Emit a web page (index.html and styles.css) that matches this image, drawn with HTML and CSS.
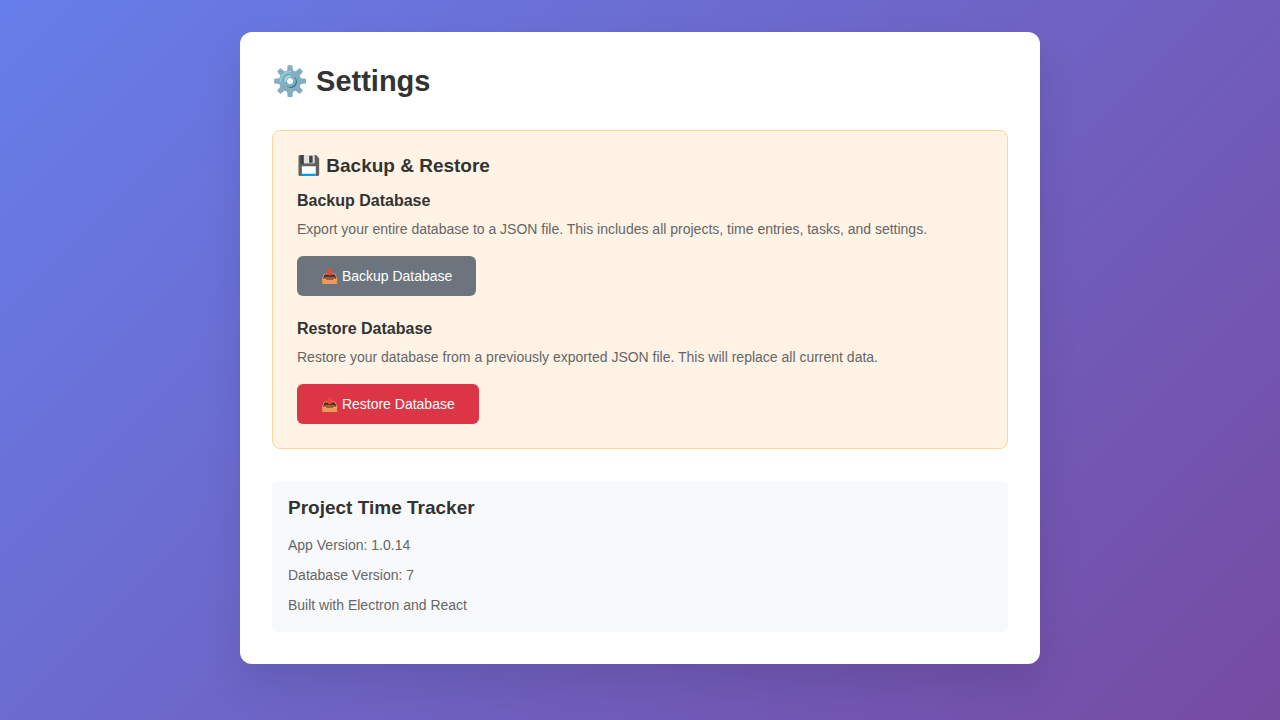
FILE: index.html
```html
<!DOCTYPE html>
<html lang="en">
<head>
<meta charset="utf-8">
<meta name="viewport" content="width=device-width, initial-scale=1">
<title>Settings</title>
<link rel="stylesheet" href="styles.css">
</head>
<body>
<main class="card">
  <h1 class="title">⚙️ Settings</h1>
  <section class="backup">
    <h2 class="heading">💾 Backup &amp; Restore</h2>
    <div class="action">
      <h3 class="subheading">Backup Database</h3>
      <p class="text">Export your entire database to a JSON file. This includes all projects, time entries, tasks, and settings.</p>
      <button type="button" class="button button-secondary">📥 Backup Database</button>
    </div>
    <div class="action">
      <h3 class="subheading">Restore Database</h3>
      <p class="text">Restore your database from a previously exported JSON file. This will replace all current data.</p>
      <button type="button" class="button button-danger">📤 Restore Database</button>
    </div>
  </section>
  <section class="about">
    <h2 class="heading">Project Time Tracker</h2>
    <p class="info">App Version: 1.0.14</p>
    <p class="info">Database Version: 7</p>
    <p class="info">Built with Electron and React</p>
  </section>
</main>
</body>
</html>
```
FILE: styles.css
```css
* {
  box-sizing: border-box;
  margin: 0;
  padding: 0;
}

body {
  min-height: 100vh;
  padding: 32px;
  font-family: "Liberation Sans", Arial, sans-serif;
  color: #333;
  background: linear-gradient(135deg, #667eea 0%, #764ba2 100%);
}

.card {
  max-width: 800px;
  margin: 0 auto;
  padding: 32px;
  background: #fff;
  border-radius: 12px;
  box-shadow: 0 20px 40px rgba(0, 0, 0, 0.1);
}

.title {
  margin-bottom: 32px;
  font-size: 29px;
  line-height: 34px;
}

.backup {
  display: flex;
  flex-direction: column;
  margin-bottom: 32px;
  padding: 24px;
  background: #fff3e6;
  border: 1px solid #ffd699;
  border-radius: 8px;
}

.heading {
  margin-bottom: 16px;
  font-size: 19px;
  line-height: 21px;
}

.action + .action {
  margin-top: 24px;
}

.subheading {
  margin-bottom: 8px;
  font-size: 16px;
  line-height: 18px;
}

.text,
.info {
  font-size: 14px;
  line-height: 22px;
  color: #666;
}

.text {
  margin-bottom: 16px;
}

.button {
  padding: 12px 24px;
  font-family: inherit;
  font-size: 14px;
  line-height: 16px;
  color: #fff;
  border: none;
  border-radius: 6px;
  cursor: pointer;
}

.button-secondary {
  background: #6c757d;
}

.button-danger {
  background: #dc3545;
}

.about {
  padding: 16px;
  background: #f8f9fa;
  border-radius: 6px;
}

.info + .info {
  margin-top: 8px;
}
```
